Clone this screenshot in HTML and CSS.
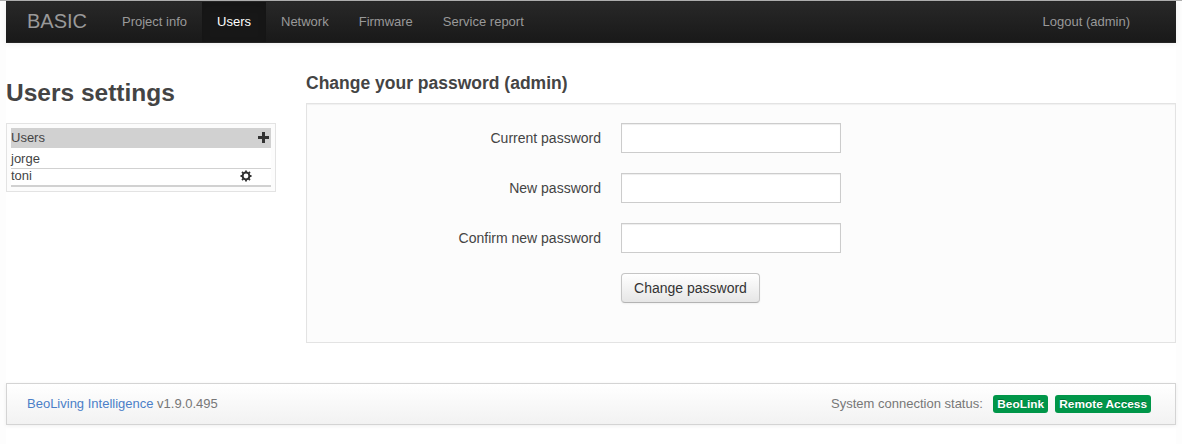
FILE: index.html
```html
<!DOCTYPE html>
<html lang="en">
<head>
<meta charset="utf-8">
<title>Users settings</title>
<link rel="stylesheet" href="styles.css">
</head>
<body>
<div class="container">
  <nav class="navbar">
    <a class="brand">BASIC</a>
    <a class="nav-link">Project info</a>
    <a class="nav-link active">Users</a>
    <a class="nav-link">Network</a>
    <a class="nav-link">Firmware</a>
    <a class="nav-link">Service report</a>
    <a class="nav-link logout">Logout (admin)</a>
  </nav>
  <main class="main">
    <aside class="sidebar">
      <h1 class="title">Users settings</h1>
      <div class="user-list">
        <div class="list-header">Users
          <svg class="plus" width="11" height="11" viewBox="0 0 11 11"><path d="M4 0h3v4h4v3H7v4H4V7H0V4h4z" fill="#333"/></svg>
        </div>
        <div class="user first">jorge</div>
        <div class="user last">toni
          <svg class="gear" width="12" height="12" viewBox="0 0 12 12"><circle cx="6" cy="6" r="3.4" fill="none" stroke="#303030" stroke-width="2"/><path d="M6 .5v2M6 9.5v2M.5 6h2M9.5 6h2M2 2l1.4 1.4M8.6 8.6L10 10M2 10l1.4-1.4M8.6 3.4L10 2" stroke="#303030" stroke-width="1.8"/></svg>
        </div>
      </div>
    </aside>
    <section class="content">
      <h2 class="subtitle">Change your password (admin)</h2>
      <form class="well">
        <label class="label" for="current">Current password</label><input class="field" id="current" type="password">
        <label class="label" for="new">New password</label><input class="field" id="new" type="password">
        <label class="label" for="confirm">Confirm new password</label><input class="field" id="confirm" type="password">
        <button class="button" type="button">Change password</button>
      </form>
    </section>
  </main>
  <footer class="footer">
    <div><a class="product">BeoLiving Intelligence</a> v1.9.0.495</div>
    <div class="status">System connection status: <span class="badge link">BeoLink</span><span class="badge remote">Remote Access</span></div>
  </footer>
</div>
</body>
</html>
```

FILE: styles.css
```css
* { box-sizing: border-box; }
body {
  margin: 0;
  height: 444px;
  overflow: hidden;
  border-top: 1px solid #adadad;
  background: #fdfdfd;
  color: #444;
  font: 13px/20px "Liberation Sans", Arial, sans-serif;
}
.container { width: 1170px; height: 443px; margin: 0 6px; background: #fff; }
.navbar {
  display: flex;
  height: 42px;
  padding: 0 31px 0 1px;
  border: 1px solid #252525;
  border-width: 1px 0;
  background: linear-gradient(#282828, #191919);
  box-shadow: 0 1px 6px rgba(0, 0, 0, .07);
  color: #999;
}
.brand { width: 100px; padding: 9px 0 0 20px; font-size: 20px; }
.nav-link { padding: 10px 15px; white-space: nowrap; }
.active { background: #171717; color: #fff; box-shadow: inset 0 3px 8px rgba(0, 0, 0, .125); }
.logout { margin-left: auto; }
.main { display: flex; gap: 30px; height: 340px; }
.sidebar { width: 270px; }
.title { margin: 30px 0 10px; font-size: 24.5px; line-height: 40px; }
.user-list { height: 69px; padding: 4px; border: 1px solid #e3e3e3; background: #fcfcfc; }
.list-header, .user { display: flex; justify-content: space-between; align-items: center; }
.list-header { height: 20px; padding-right: 2px; background: #d1d1d1; }
.plus { margin-bottom: 1px; }
.user { border-bottom: 1px solid #d1d1d1; background: #fff; }
.first { height: 21px; padding-top: 2px; }
.last { height: 18px; padding: 0 19px 2px 0; border-bottom-width: 2px; line-height: 14px; }
.content { width: 870px; }
.subtitle { margin: 20px 0 0; font-size: 17.5px; line-height: 40px; }
.well {
  display: grid;
  grid-template-columns: 294px 220px;
  grid-auto-rows: 30px;
  gap: 20px;
  height: 240px;
  padding: 19px 0;
  border: 1px solid #e3e3e3;
  background: #fcfcfc;
  box-shadow: inset 0 1px 1px rgba(0, 0, 0, .05);
  font-size: 14px;
}
.label { padding-top: 5px; text-align: right; }
.field {
  width: 220px;
  height: 30px;
  padding: 4px 6px;
  border: 1px solid #ccc;
  background: #fff;
  box-shadow: inset 0 1px 1px rgba(0, 0, 0, .075);
}
.button {
  grid-column: 2;
  width: 139px;
  padding: 0;
  border: 1px solid #c5c5c5;
  border-bottom-color: #b3b3b3;
  border-radius: 4px;
  background: linear-gradient(#fff, #e6e6e6);
  box-shadow: 0 1px 2px rgba(0, 0, 0, .05);
  color: #333;
  font: 14px/20px "Liberation Sans", Arial, sans-serif;
}
.footer {
  display: flex;
  justify-content: space-between;
  height: 42px;
  padding: 10px 24px 0 20px;
  border: 1px solid #d4d4d4;
  background: linear-gradient(#fff, #f2f2f2);
  box-shadow: 0 1px 4px rgba(0, 0, 0, .067);
  color: #777;
}
.product { color: #4b7fc8; }
.status { display: flex; }
.badge {
  height: 18px;
  margin: 1px 0 0 7px;
  padding: 2px 4px;
  border-radius: 3px;
  background: #009649;
  color: #fff;
  font-size: 11.844px;
  font-weight: bold;
  line-height: 14px;
  text-shadow: 0 -1px 0 rgba(0, 0, 0, .25);
}
.link { width: 55px; margin-left: 10.5px; }
```
